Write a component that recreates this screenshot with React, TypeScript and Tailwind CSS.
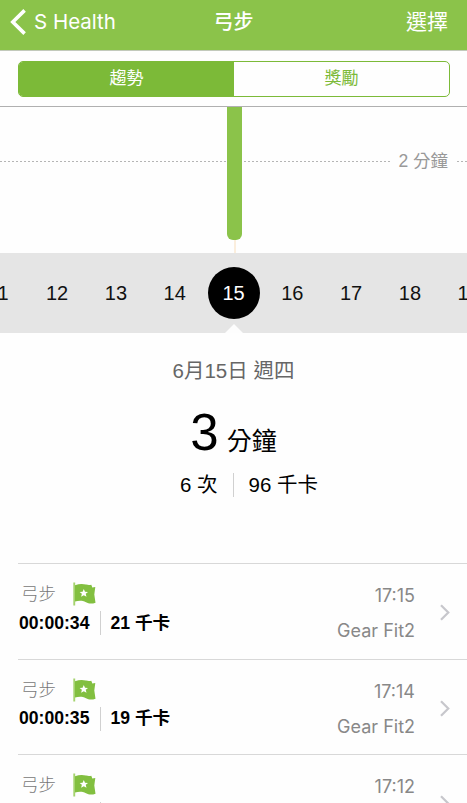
import React from 'react';

interface Session {
  time: string;
  duration: string;
  calories: number;
}

const sessions: Session[] = [
  { time: '17:15', duration: '00:00:34', calories: 21 },
  { time: '17:14', duration: '00:00:35', calories: 19 },
  { time: '17:12', duration: '00:00:35', calories: 20 }
];

const days = [11, 12, 13, 14, 15, 16, 17, 18, 19];
const selectedDay = 15;

const FlagIcon: React.FC = () => (
  <svg className="w-[23px] h-[24px]" viewBox="0 0 23 24">
    <path d="M0.3 0.5h1.9v23H0.3z" fill="#a5d36f" />
    <path
      d="M2 3.2C6 1.8 10 1.8 13 2.6C15.5 3.3 17 3 18.3 2.8L19.3 5.6L22.3 5L21.3 12.5L22.5 20.7C18.5 22.3 15.5 21.6 13 20.2C9 18.2 6 18.6 2 19.4z"
      fill="#82bf40"
    />
    <path
      d="M10.8 6.9l1.2 2.8 3 .2-2.3 1.9.8 3-2.7-1.6-2.7 1.6.8-3-2.3-1.9 3-.2z"
      fill="#fff"
    />
  </svg>
);

const Header: React.FC = () => (
  <header className="h-[51px] shrink-0 bg-[#8bc34a] border-b border-[#c2c9bb] grid grid-cols-3 items-center text-white pb-[6px]">
    <button className="flex items-center pl-[10px] gap-[8px]">
      <svg className="w-[16px] h-[26px]" viewBox="0 0 16 26" fill="none" stroke="currentColor" strokeWidth="3.6">
        <path d="M14.6 1.4L2.8 13L14.6 24.6" />
      </svg>
      <span className="font-['Inter','Noto_Sans_CJK_TC',sans-serif] text-[20.5px] leading-[24px] whitespace-nowrap">S Health</span>
    </button>
    <h1 className="text-center text-[20px] leading-[24px] font-medium">弓步</h1>
    <button className="text-right pr-[19px] text-[21px] leading-[24px]">選擇</button>
  </header>
);

const Segments: React.FC = () => (
  <div className="h-[56px] shrink-0 pt-[10px] px-[18px] pr-[17px] border-b border-[#b0b0b0]">
    <div className="h-[36px] flex rounded-[5px] border border-[#7cba38] overflow-hidden text-[17px] leading-[34px]">
      <button className="flex-1 bg-[#7cba38] text-white">趨勢</button>
      <button className="flex-1 text-[#7cba38]">獎勵</button>
    </div>
  </div>
);

const Chart: React.FC = () => (
  <div className="relative h-[146px] shrink-0 pt-[41px]">
    <div className="flex items-center h-[26px]">
      <svg className="flex-1 h-[1px]">
        <line x1="0" y1="0.5" x2="100%" y2="0.5" stroke="#b5b5b5" strokeDasharray="2 2" />
      </svg>
      <span className="pl-[8px] pr-[9px] text-[17.5px] leading-[26px] text-[#999]">2 分鐘</span>
      <svg className="w-[10px] h-[1px]">
        <line x1="0" y1="0.5" x2="10" y2="0.5" stroke="#b5b5b5" strokeDasharray="2 2" />
      </svg>
    </div>
    <div className="absolute top-0 left-[227px] w-[15px] h-full flex flex-col items-center">
      <div className="w-full h-[133px] bg-[#8bc34a] rounded-b-[6px]"></div>
      <div className="w-[2px] flex-1 bg-[#fbeedd]"></div>
    </div>
  </div>
);

const DayStrip: React.FC = () => (
  <div className="relative h-[80px] shrink-0 bg-[#e5e5e5] flex items-center justify-center overflow-hidden">
    {days.map(day => (
      <div key={day} className="w-[58.8px] shrink-0 flex justify-center">
        <span
          className={`w-[52px] h-[52px] rounded-full flex items-center justify-center text-[20px] ${
            day === selectedDay ? 'bg-black text-white' : 'text-[#111]'
          }`}
        >
          {day}
        </span>
      </div>
    ))}
    <svg className="absolute bottom-0 left-[225px] w-[18px] h-[9px]" viewBox="0 0 18 9">
      <path d="M0 9L9 0L18 9z" fill="#fdfdfd" />
    </svg>
  </div>
);

const Summary: React.FC = () => (
  <section className="h-[230px] shrink-0 flex flex-col items-center pt-[24px] text-black">
    <div className="text-[20.5px] leading-[28px] text-[#666]">6月15日 週四</div>
    <div className="flex items-baseline mt-[18px] h-[60px] leading-[60px]">
      <span className="text-[51px]">3</span>
      <span className="text-[25px] ml-[8px]">分鐘</span>
    </div>
    <div className="flex items-center mt-[9px] h-[26px] pl-[31px] pr-[0px] -ml-[0px] text-[20.5px] leading-[26px] w-full max-w-[467px] justify-center">
      <span>6 次</span>
      <span className="w-px h-[24px] bg-[#d0d0d0] mx-[15px]"></span>
      <span>96 千卡</span>
    </div>
  </section>
);

const SessionRow: React.FC<{ session: Session }> = ({ session }) => (
  <li className="h-[95.6px] shrink-0 ml-[18px] border-t border-[#d8d8d8] flex">
    <div className="pt-[17px] pl-[1px]">
      <div className="flex items-center h-[26px] gap-[17px] pl-[2px]">
        <span className="text-[17.5px] leading-[26px] font-light text-[#777]">弓步</span>
        <FlagIcon />
      </div>
      <div className="flex items-center h-[24px] mt-[4px] font-bold text-[17.6px] text-black">
        <span>{session.duration}</span>
        <span className="w-px h-[24px] bg-[#d0d0d0] ml-[11px] mr-[9px]"></span>
        <span>{session.calories} 千卡</span>
      </div>
    </div>
    <div className="ml-auto pt-[20px] text-right font-['Inter','Noto_Sans_CJK_TC',sans-serif] text-[18px] leading-[24px] text-[#888]">
      <div>{session.time}</div>
      <div className="mt-[11px]">Gear Fit2</div>
    </div>
    <svg className="w-[10px] h-[17px] mt-[40px] ml-[25px] mr-[17px]" viewBox="0 0 10 17" fill="none" stroke="#c7c7cc" strokeWidth="2.2">
      <path d="M1 1.2L8.3 8.5L1 15.8" />
    </svg>
  </li>
);

const App: React.FC = () => {
  return (
    <div className="w-[467px] h-[803px] bg-[#fefefe] flex flex-col overflow-hidden font-['Liberation_Sans','Noto_Sans_CJK_TC',sans-serif]">
      <Header />
      <Segments />
      <Chart />
      <DayStrip />
      <Summary />
      <ul className="flex flex-col">
        {sessions.map(session => (
          <SessionRow key={session.time} session={session} />
        ))}
      </ul>
    </div>
  );
};

export default App;
